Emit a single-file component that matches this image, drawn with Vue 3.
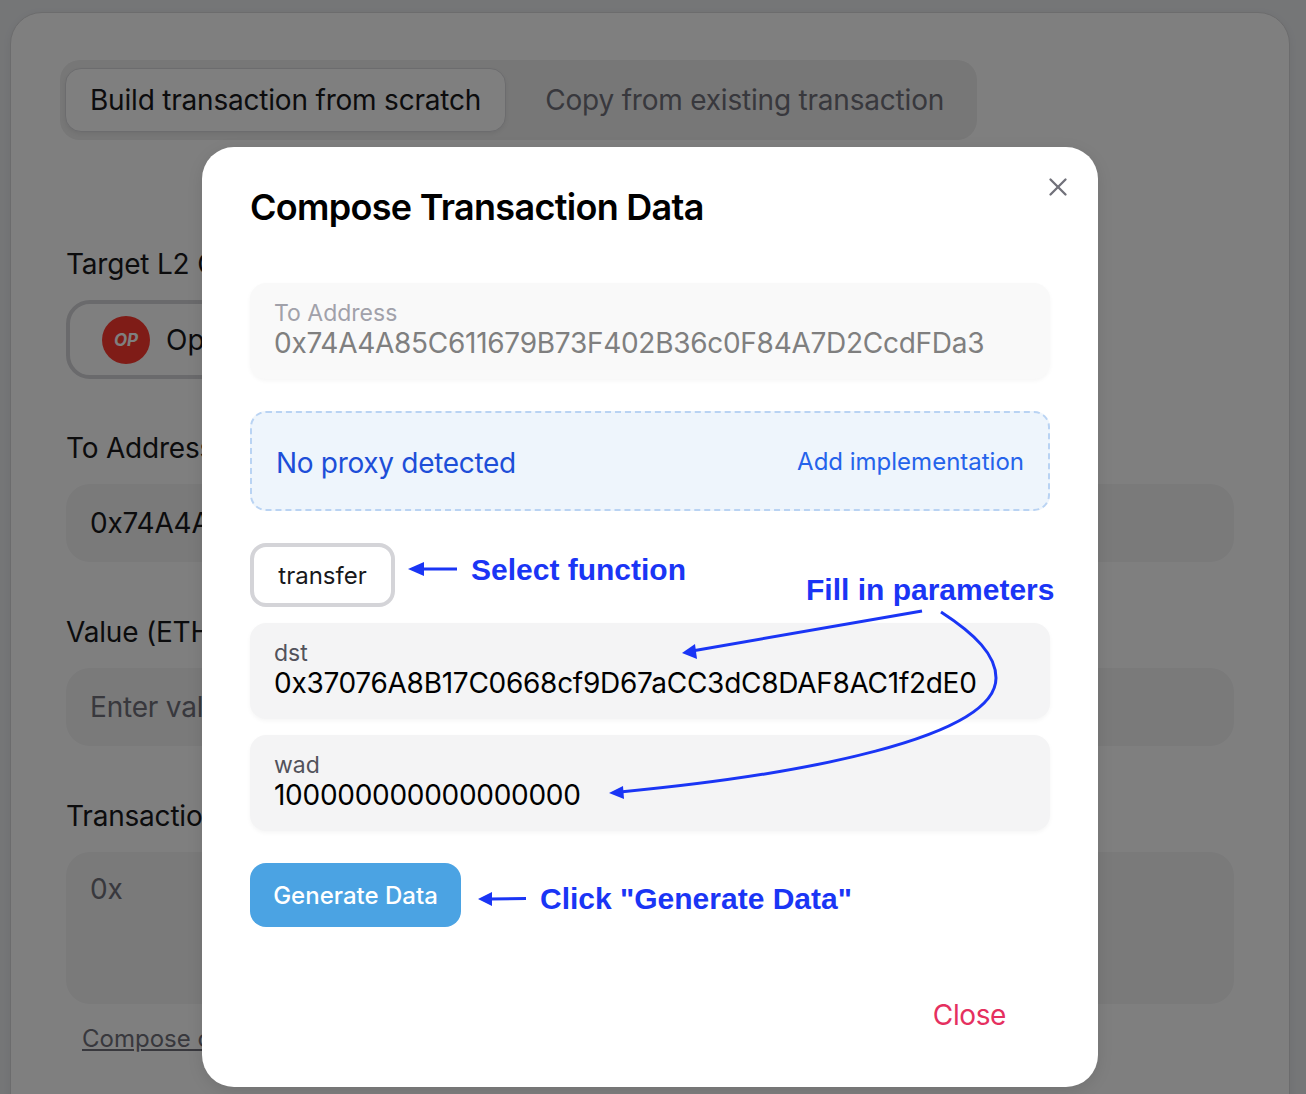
<template>
  <div class="page">
    <div class="panel">
      <div class="tabs">
        <button class="tab active">Build transaction from scratch</button>
        <button class="tab">Copy from existing transaction</button>
      </div>

      <label class="field-label first">Target L2 Chain</label>
      <div class="chain-select">
        <span class="op-logo">OP</span>
        <span>Optimism</span>
      </div>

      <label class="field-label addr">To Address</label>
      <div class="input">0x74A4A85C611679B73F402B36c0F84A7D2CcdFDa3</div>

      <label class="field-label val">Value (ETH)</label>
      <div class="input muted">Enter value</div>

      <label class="field-label tx">Transaction data</label>
      <div class="input area muted">0x</div>
      <a class="compose-link">Compose calldata</a>
    </div>

    <div class="overlay"></div>

    <div class="modal" role="dialog" aria-label="Compose Transaction Data">
      <h2 class="modal-title">Compose Transaction Data</h2>
      <button class="modal-x" aria-label="Close">
        <svg viewBox="0 0 24 24" fill="none" stroke="currentColor" stroke-width="2.8" stroke-linecap="round">
          <line x1="3" y1="3" x2="21" y2="21"/>
          <line x1="21" y1="3" x2="3" y2="21"/>
        </svg>
      </button>

      <div class="card readonly">
        <div class="card-label">To Address</div>
        <div class="card-value">0x74A4A85C611679B73F402B36c0F84A7D2CcdFDa3</div>
      </div>

      <div class="proxy-box">
        <span class="proxy-text">No proxy detected</span>
        <span class="proxy-link">Add implementation</span>
      </div>

      <button class="fn-btn">transfer</button>

      <div v-for="p in params" :key="p.name" class="card param">
        <div class="card-label">{{ p.name }}</div>
        <div class="card-value">{{ p.value }}</div>
      </div>

      <button class="generate">Generate Data</button>

      <div class="modal-foot">
        <button class="close-btn">Close</button>
      </div>
    </div>

    <!-- Annotations drawn on top of the screenshot -->
    <svg class="arrows" viewBox="0 0 1306 1094" fill="none" stroke="#1a35f5" stroke-width="3">
      <path d="M457 569H420"/>
      <polygon points="408,569 424,562 424,576" fill="#1a35f5" stroke="none"/>
      <path d="M922 611L692 651"/>
      <polygon points="682,653 695,644 697,659" fill="#1a35f5" stroke="none"/>
      <path d="M941 612C975 634 996 655 996 678C996 738 800 775 620 792"/>
      <polygon points="609,793 623,786 624,799" fill="#1a35f5" stroke="none"/>
      <path d="M526 898.500L490 899"/>
      <polygon points="478,899 492,892 492,906" fill="#1a35f5" stroke="none"/>
    </svg>
    <span class="note note-select">Select function</span>
    <span class="note note-fill">Fill in parameters</span>
    <span class="note note-click">Click "Generate Data"</span>
  </div>
</template>

<script setup>
const params = [
  { name: 'dst', value: '0x37076A8B17C0668cf9D67aCC3dC8DAF8AC1f2dE0' },
  { name: 'wad', value: '100000000000000000' },
]
</script>

<style>
html, body { margin: 0; overflow: hidden; }
</style>

<style scoped>
.page {
  position: relative;
  height: 1094px;
  overflow: hidden;
  padding: 12px 16px 0 10px;
  box-sizing: border-box;
  background: #eaecef;
  font-family: Inter, "Noto Sans", sans-serif;
  color: #18181b;
}

.panel {
  height: 1200px;
  box-sizing: border-box;
  padding: 47px 55px 0 49px;
  background: #fff;
  border: 1px solid #d8d8da;
  border-radius: 32px;
  box-shadow: 0 2px 8px rgba(0, 0, 0, 0.06);
}

.tabs {
  display: inline-flex;
  gap: 0;
  padding: 8px 17px 8px 5px;
  background: #eeeeee;
  border-radius: 20px;
}
.tab {
  padding: 0 24px;
  height: 64px;
  border: 1px solid transparent;
  border-radius: 16px;
  background: transparent;
  color: #71717a;
  font: 400 28px Inter, sans-serif;
  letter-spacing: -0.2px;
  white-space: nowrap;
}
.tab + .tab { padding: 0 15px 0 38px; }
.tab.active {
  background: #fff;
  border-color: #d8d8dc;
  color: #18181b;
  box-shadow: 0 2px 4px rgba(0, 0, 0, 0.06);
}

.field-label {
  display: block;
  margin-left: 6px;
  font-size: 28px;
  line-height: 36px;
  color: #18181b;
  letter-spacing: -0.2px;
}
.field-label.first { margin-top: 106px; }
.field-label.addr { margin-top: 51px; }
.field-label.val { margin-top: 52px; }
.field-label.tx { margin-top: 52px; }

.chain-select {
  display: flex;
  align-items: center;
  gap: 16px;
  width: 700px;
  height: 79px;
  box-sizing: border-box;
  margin: 18px 0 0 6px;
  padding-left: 32px;
  border: 4px solid #d4d4d8;
  border-radius: 24px;
  font-size: 28px;
}
.op-logo {
  display: flex;
  align-items: center;
  justify-content: center;
  width: 48px;
  height: 48px;
  border-radius: 50%;
  background: #fe382e;
  color: #fff;
  font-size: 17px;
  font-weight: 700;
  font-style: italic;
}

.input {
  display: flex;
  align-items: center;
  height: 78px;
  box-sizing: border-box;
  margin: 18px 0 0 6px;
  padding-left: 24px;
  background: #f4f4f5;
  border-radius: 24px;
  font-size: 28px;
  letter-spacing: -0.2px;
}
.input.muted { color: #71717a; }
.input.area {
  align-items: flex-start;
  height: 152px;
  padding-top: 20px;
}
.compose-link {
  display: inline-block;
  margin: 20px 0 0 22px;
  font-size: 24px;
  color: #71717a;
  text-decoration: underline;
}

.overlay {
  position: absolute;
  inset: 0;
  background: rgba(0, 0, 0, 0.5);
}

.modal {
  position: absolute;
  left: 202px;
  top: 147px;
  width: 896px;
  height: 940px;
  box-sizing: border-box;
  padding: 0 48px;
  background: #fff;
  border-radius: 32px;
  box-shadow: 0 4px 16px rgba(0, 0, 0, 0.1);
}
.modal-title {
  margin: 36px 0 0;
  font-size: 36px;
  line-height: 48px;
  font-weight: 600;
  color: #000;
  letter-spacing: -0.7px;
}
.modal-x {
  position: absolute;
  top: 30px;
  right: 30px;
  width: 20px;
  height: 20px;
  padding: 0;
  border: none;
  background: transparent;
  color: #71717a;
}
.modal-x svg { display: block; width: 20px; height: 20px; }

.card {
  height: 96px;
  box-sizing: border-box;
  padding: 16px 24px 0;
  background: #f4f4f5;
  border-radius: 16px;
  box-shadow: 0 2px 4px rgba(0, 0, 0, 0.04);
}
.card-label {
  font-size: 23px;
  line-height: 28px;
  color: #52525b;
}
.card-value {
  font-size: 28px;
  line-height: 33px;
  color: #000;
  letter-spacing: -0.28px;
  white-space: nowrap;
}
.card.readonly {
  margin-top: 52px;
  background: #f9f9f9;
}
.card.readonly .card-label { color: #a1a1aa; }
.card.readonly .card-value { color: #7f7f7f; }
.card.param { margin-top: 16px; }

.proxy-box {
  display: flex;
  align-items: center;
  justify-content: space-between;
  height: 100px;
  box-sizing: border-box;
  margin-top: 32px;
  padding: 0 24px;
  background: #eef5fc;
  border: 2px dashed #b9d3f3;
  border-radius: 16px;
}
.proxy-text { margin-top: 4px; font-size: 28px; letter-spacing: -0.3px; color: #1d4ed8; }
.proxy-link { font-size: 24px; color: #2563eb; }

.fn-btn {
  display: block;
  width: 145px;
  height: 64px;
  margin-top: 32px;
  padding: 0;
  background: #fff;
  border: 4px solid #d4d4d8;
  border-radius: 16px;
  color: #18181b;
  font: 400 24px Inter, sans-serif;
}
.fn-btn + .card { margin-top: 16px; }

.generate {
  display: block;
  width: 211px;
  height: 64px;
  margin-top: 32px;
  padding: 0;
  background: #4ba3e3;
  border: none;
  border-radius: 16px;
  color: #fff;
  font: 500 24px Inter, sans-serif;
}

.modal-foot {
  display: flex;
  justify-content: flex-end;
  margin-top: 71px;
  padding-right: 44px;
}
.close-btn {
  padding: 0;
  border: none;
  background: transparent;
  color: #e5305f;
  font: 400 28px Inter, sans-serif;
  letter-spacing: -0.4px;
}

.arrows {
  position: absolute;
  inset: 0;
  width: 1306px;
  height: 1094px;
  pointer-events: none;
}
.note {
  position: absolute;
  font-family: "Liberation Sans", Arial, sans-serif;
  font-weight: 700;
  font-size: 30px;
  line-height: 36px;
  color: #1a35f5;
  white-space: nowrap;
}
.note-select { left: 471px; top: 552px; }
.note-fill { left: 806px; top: 572px; }
.note-click { left: 540px; top: 881px; }
</style>
